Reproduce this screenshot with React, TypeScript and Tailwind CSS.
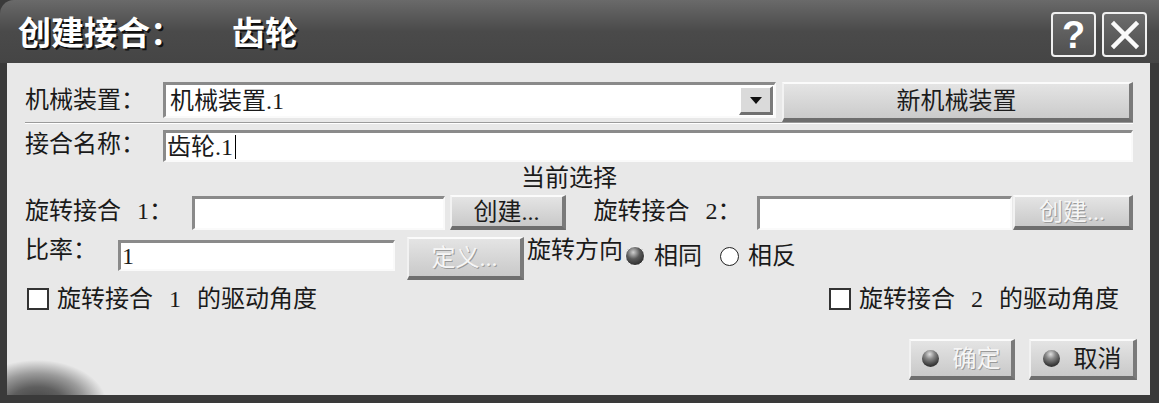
import React from "react";

const F = { fontFamily: '"Liberation Serif", "Noto Sans CJK SC", serif' };

function Inset({ className = "", children }: { className?: string; children?: React.ReactNode }) {
  return (
    <div
      className={
        "bg-white border-t-[3px] border-l-[3px] border-b-[2px] border-r-[2px] border-t-[#8a8a8a] border-l-[#8a8a8a] border-b-[#fafafa] border-r-[#fafafa] flex items-center " +
        className
      }
    >
      {children}
    </div>
  );
}

function Btn({
  className = "",
  disabled = false,
  children,
}: {
  className?: string;
  disabled?: boolean;
  children?: React.ReactNode;
}) {
  return (
    <div
      className={
        "flex items-center justify-center bg-gradient-to-b from-[#e4e4e4] to-[#c9c9c9] border-t-[2px] border-l-[2px] border-b-[4px] border-r-[4px] border-t-[#fbfbfb] border-l-[#f2f2f2] border-b-[#6e6e6e] border-r-[#7a7a7a] text-[24px] leading-none " +
        (disabled ? "text-[#f6f6f6] [text-shadow:1px_1px_0_#9a9a9a] " : "text-[#1c1c1c] ") +
        className
      }
    >
      {children}
    </div>
  );
}

function Ball() {
  return (
    <span className="inline-block w-[17px] h-[17px] rounded-full bg-[radial-gradient(circle_at_45%_25%,#e0e0e0_0%,#8a8a8a_30%,#3a3a3a_70%,#222_100%)] mr-[14px]" />
  );
}

export default function App() {
  return (
    <div className="w-[1159px] h-[403px] bg-[#3a3a3a] flex flex-col overflow-hidden" style={F}>
      {/* title bar */}
      <div className="h-[63px] rounded-tl-[14px] bg-gradient-to-b from-[#6a6a6a] via-[#4a4a4a] to-[#454545] flex items-center pl-[18px] pr-[12px]">
        <div
          className="text-white text-[33px] font-bold [text-shadow:2px_2px_0_#111] leading-none"
          style={{ fontFamily: '"Noto Sans CJK SC", sans-serif' }}
        >
          创建接合：<span className="ml-[49px]">齿轮</span>
        </div>
        <div className="ml-auto flex gap-[6px] pt-[6px]">
          <div className="w-[45px] h-[45px] rounded-[4px] border-[2px] border-[#f0f0f0] bg-gradient-to-b from-[#6c6c6c] to-[#505050] flex items-center justify-center text-white text-[38px] font-bold leading-none" style={{ fontFamily: '"Liberation Sans", sans-serif' }}>
            ?
          </div>
          <div className="w-[45px] h-[45px] rounded-[4px] border-[2px] border-[#f0f0f0] bg-gradient-to-b from-[#6c6c6c] to-[#505050] flex items-center justify-center">
            <svg width="30" height="30" viewBox="0 0 30 30">
              <path d="M4 4 L26 26 M26 4 L4 26" stroke="#fafafa" strokeWidth="4.5" strokeLinecap="square" />
            </svg>
          </div>
        </div>
      </div>

      {/* body */}
      <div className="flex-1 ml-[7px] mr-[9px] mb-[8px] bg-[#e8e8e8] relative text-[24px] leading-none [word-spacing:10px] text-[#1a1a1a] pl-[18px] pr-[17px] pt-[19px] flex flex-col">
        <div className="absolute left-0 bottom-0 w-[120px] h-[50px] bg-[radial-gradient(ellipse_70px_45px_at_30px_60px,#3e3e3e_0%,#5e5e5e_40%,#9a9a9a_70%,rgba(232,232,232,0)_100%)]" />

        {/* row 1 */}
        <div className="flex items-start h-[40px]">
          <div className="w-[138px] h-[36px] flex items-center">机械装置：</div>
          <Inset className="w-[613px] h-[36px] pl-[4px] justify-between">
            <span>机械装置.1</span>
            <div className="w-[34px] h-[29px] mr-[1px] bg-[#dadada] border-t-[2px] border-l-[2px] border-b-[3px] border-r-[3px] border-t-white border-l-white border-b-[#707070] border-r-[#7a7a7a] flex items-center justify-center">
              <svg width="12" height="7" viewBox="0 0 12 7">
                <path d="M0 0 H12 L6 7 Z" fill="#111" />
              </svg>
            </div>
          </Inset>
          <Btn className="ml-[6px] w-[351px] h-[40px] bg-gradient-to-b from-[#dedede] to-[#cbcbcb]">新机械装置</Btn>
        </div>

        <div className="h-[2px] bg-[#9a9a9a] border-b border-white" />

        {/* row 2 */}
        <div className="flex items-center mt-[6px] h-[32px]">
          <div className="w-[138px] mt-[-4px]">接合名称：</div>
          <Inset className="flex-1 h-[32px] pl-[1px]">
            <span>齿轮.1</span>
            <span className="w-[1px] h-[24px] bg-black ml-[2px]" />
          </Inset>
        </div>

        {/* current selection */}
        <div className="h-[28px] flex items-end justify-center pr-[20px]">
          <span>当前选择</span>
        </div>

        {/* row 3 */}
        <div className="flex items-center mt-[5px] h-[35px]">
          <div className="w-[167px] mt-[-4px]">旋转接合 1：</div>
          <Inset className="w-[253px] h-[34px]" />
          <Btn className="ml-[5px] w-[116px] h-[35px]">创建...</Btn>
          <div className="ml-[28px] w-[164px] mt-[-4px]">旋转接合 2：</div>
          <Inset className="w-[255px] h-[34px]" />
          <Btn disabled className="ml-[1px] w-[120px] h-[35px]">创建...</Btn>
        </div>

        {/* row 4 */}
        <div className="flex items-start mt-[7px] h-[43px]">
          <div className="w-[93px] mt-[1px]">比率：</div>
          <Inset className="w-[277px] h-[31px] mt-[3px] pl-[1px]">1</Inset>
          <Btn disabled className="ml-[12px] w-[117px] h-[43px]">定义...</Btn>
          <div className="ml-[3px] mt-[1px]">旋转方向</div>
          <div className="flex items-center mt-[7px] ml-[2px]">
            <span className="inline-block w-[20px] h-[20px] rounded-full bg-[radial-gradient(circle_at_40%_30%,#cfcfcf_0%,#5a5a5a_40%,#151515_100%)] border border-[#f0f0f0] mr-[9px]" />
            <span>相同</span>
            <span className="inline-block w-[19px] h-[19px] rounded-full bg-white border-[1.5px] border-[#222] ml-[18px] mr-[9px]" />
            <span>相反</span>
          </div>
        </div>

        {/* row 5 */}
        <div className="flex items-center mt-[6px] h-[26px]">
          <span className="w-[22px] h-[22px] border-[2px] border-[#333] bg-white ml-[2px] mr-[8px]" />
          <span>旋转接合 1 的驱动角度</span>
          <span className="ml-auto w-[22px] h-[22px] border-[2px] border-[#333] bg-white mr-[8px]" />
          <span className="mr-[14px]">旋转接合 2 的驱动角度</span>
        </div>

        {/* bottom buttons */}
        <div className="flex justify-end mt-[27px] mr-[-4px]">
          <Btn disabled className="w-[106px] h-[41px]">
            <Ball />
            确定
          </Btn>
          <Btn className="ml-[14px] w-[108px] h-[41px]">
            <Ball />
            取消
          </Btn>
        </div>
      </div>
    </div>
  );
}
